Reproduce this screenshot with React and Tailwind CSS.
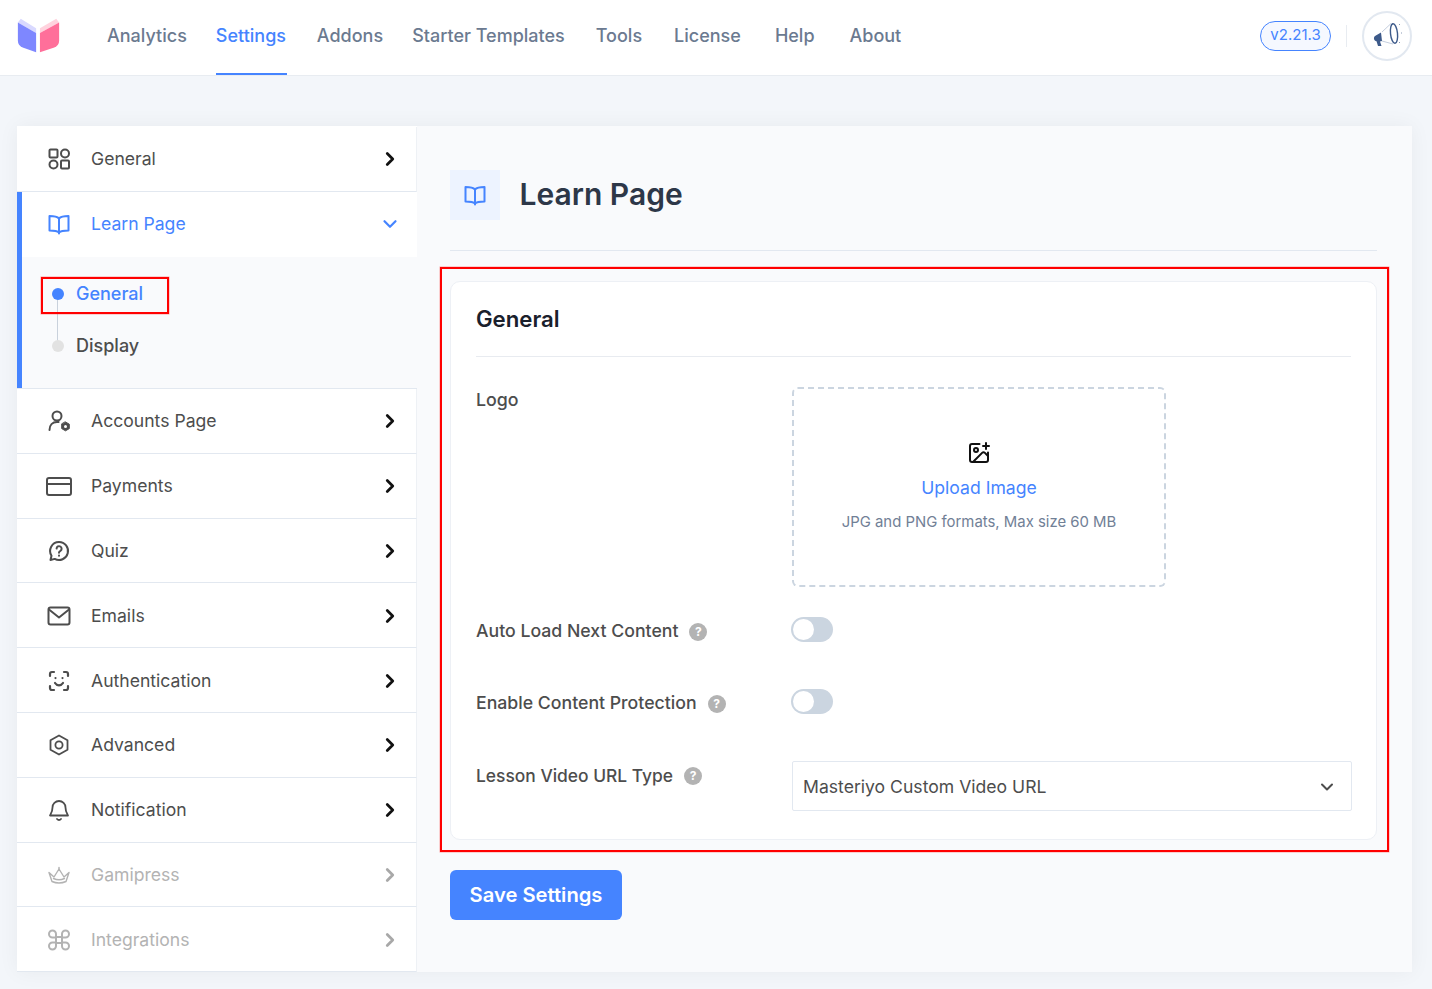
import React from 'react';
import { ChevronRight, ChevronDown, ImagePlus } from 'lucide-react';

const S = ({ children, size = 24, sw = 2, cls = '' }) => (
  <svg width={size} height={size} viewBox="0 0 24 24" fill="none" stroke="currentColor" strokeWidth={sw} strokeLinecap="round" strokeLinejoin="round" className={cls}>{children}</svg>
);

const Book = ({ size = 24, sw = 2 }) => (
  <S size={size} sw={sw}>
    <path d="M12 6.500C10.500 4.800 8 4 2.500 4v14.500c5.500 0 8 .6 9.500 2 1.500-1.400 4-2 9.500-2V4C16 4 13.500 4.800 12 6.500Z" />
    <path d="M12 6.500v15" />
  </S>
);

const icons = {
  grid: (
    <S>
      <rect x="2.500" y="2.500" width="8" height="8" rx="1" /><circle cx="18" cy="6.500" r="4" />
      <circle cx="6.500" cy="17.500" r="4" /><rect x="14" y="13.500" width="8" height="8" rx="1" />
    </S>
  ),
  user: (
    <S>
      <circle cx="10" cy="7" r="4.500" />
      <path d="M2.500 21c0-5 3-8 7.500-8 .6 0 1.100 0 1.600.1" />
      <path d="M18.500 13l3.800 2.200v4.400L18.500 21.800l-3.800-2.200v-4.400Z" fill="currentColor" strokeWidth="1" />
      <circle cx="18.500" cy="17.400" r="1.500" fill="#fff" stroke="none" />
    </S>
  ),
  card: (
    <svg width="26" height="24" viewBox="0 0 26 24" fill="none" stroke="currentColor" strokeWidth="2" strokeLinejoin="round">
      <rect x="1" y="4" width="24" height="17" rx="2" /><path d="M1 10h24" />
    </svg>
  ),
  quiz: (
    <S>
      <path d="M12 3a9 9 0 1 1-4.300 16.900L3.500 21l1-4.200A9 9 0 0 1 12 3Z" />
      <path d="M9.600 9.600a2.500 2.500 0 1 1 3.800 2.200c-.9.5-1.400 1-1.400 2" /><path d="M12 16.600v.1" />
    </S>
  ),
  mail: (
    <S>
      <rect x="1.500" y="3.500" width="21" height="17" rx="2" /><path d="M2 5.500l10 8 10-8" />
    </S>
  ),
  face: (
    <S sw={2.2}>
      <path d="M3 7V5a2 2 0 0 1 2-2h2M17 3h2a2 2 0 0 1 2 2v2M21 17v2a2 2 0 0 1-2 2h-2M7 21H5a2 2 0 0 1-2-2v-2" />
      <path d="M8 14c1 1.600 2.400 2.300 4 2.300s3-.7 4-2.300" /><path d="M8.500 9v.1M15.500 9v.1" />
    </S>
  ),
  hex: (
    <S sw={1.8}>
      <path d="M12 2.500l8.500 4.800v9.400L12 21.500l-8.500-4.800V7.300Z" /><circle cx="12" cy="12" r="3.600" />
    </S>
  ),
  bell: (
    <S sw={1.8}>
      <path d="M12 3a6.500 6.500 0 0 0-6.500 6.500c0 4.500-2 6.500-2.500 8h18c-.5-1.500-2.500-3.500-2.500-8A6.500 6.500 0 0 0 12 3Z" />
      <path d="M10 21c.6.7 1.200 1 2 1s1.400-.3 2-1" />
    </S>
  ),
  crown: (
    <S sw={1.4}>
      <path d="M2 9.500 5 18.500Q12 21.500 19 18.500L22 9.500 17 14 12 6 7 14Z" />
      <path d="M12 6V4.500" />
      <path d="M6.500 15.500Q12 18 17.500 15.500" />
    </S>
  ),
  cmd: (
    <S>
      <path d="M15 9H9v6h6V9Z" />
      <path d="M9 9V6a3.500 3.500 0 1 0-3.500 3.500H9M15 9V6a3.500 3.500 0 1 1 3.500 3.500H15M9 15v3a3.500 3.500 0 1 1-3.500-3.500H9M15 15v3a3.500 3.500 0 1 0 3.500-3.500H15" />
    </S>
  ),
};

function Row({ icon, label, muted }) {
  return (
    <div className={`flex items-center h-[64.8px] pt-[1px] border-b border-r border-b-[#e2e8f0] border-r-[#eef1f5] pl-[28.5px] pr-[15px] ${muted ? 'text-[#b3b3b3]' : 'text-[#4d4d4d]'}`}>
      <span className="w-[26px] flex justify-center shrink-0">{icons[icon]}</span>
      <span className="ml-[19.5px] text-[17.6px] leading-6 flex-1">{label}</span>
      <ChevronRight size={22} strokeWidth={3} className={muted ? 'text-[#a8a8a8]' : 'text-[#111]'} />
    </div>
  );
}

function Help() {
  return <span className="w-[18px] h-[18px] rounded-full bg-[#b3b3b3] text-white text-[12px] font-bold flex items-center justify-center ml-[11px] mt-[1px] shrink-0">?</span>;
}

function Toggle() {
  return (
    <div className="w-[42px] h-[25px] rounded-full bg-[#cbd5e0] p-[2px] ml-[-1px]">
      <div className="w-[21px] h-[21px] rounded-full bg-white" />
    </div>
  );
}

const nav = [
  ['Analytics', 'ml-[45px]'], ['Settings', 'ml-[29px] w-[71px]'], ['Addons', 'ml-[30px]'], ['Starter Templates', 'ml-[29px]'],
  ['Tools', 'ml-[31px]'], ['License', 'ml-[32px]'], ['Help', 'ml-[34px]'], ['About', 'ml-[35px]'],
];

export default function App() {
  return (
    <div className="min-h-[989px] bg-[#f3f6fa] text-[#4d4d4d]" style={{ fontFamily: 'Inter, "Noto Sans", sans-serif' }}>
      <header className="h-[76px] bg-white border-b border-[#e8ecf1] flex items-stretch pl-[15px] pr-[20px]">
        <div className="flex items-center pb-[3px]">
          <svg width="47" height="40" viewBox="0 0 49 40">
            <path d="M6 2 22 12V17L3 6Z" fill="#d9d9ff" />
            <path d="M43 2 26 12V17L46 6Z" fill="#ffd3de" />
            <path d="M3 6 22 17V37L8 32Q3 30 3 25Z" fill="#7e87ff" />
            <path d="M46 6 26 17V37L41 32Q46 30 46 25Z" fill="#ff6f9a" />
          </svg>
        </div>
        <nav className="flex items-stretch text-[18px] font-[550] text-[#6b7a90]">
          {nav.map(([n, m]) => (
            <div key={n} className={`${m} flex items-center pb-[4px] ${n === 'Settings' ? 'text-[#4584ff] border-b-2 border-[#4584ff] pt-[2px]' : ''}`}>{n}</div>
          ))}
        </nav>
        <div className="ml-auto flex items-center pb-[4px]">
          <div className="h-[30px] w-[71px] rounded-full border border-[#4584ff] bg-[#f5f8ff] text-[#4584ff] text-[15px] flex items-center justify-center">v2.21.3</div>
          <div className="w-px h-[22px] bg-[#e8ecf1] mx-[15px]" />
          <div className="w-[50px] h-[50px] rounded-full border-2 border-[#e2e8f0] flex items-center justify-center">
            <svg width="30" height="30" viewBox="0 0 30 30" fill="none">
              <path d="M9 11.500 3 15c-1.500 1-1.500 4 .5 5l1 .3L6 25H9.500L8 20.500 10 20Z" fill="#3d5a8a" />
              <path d="M10 11l9-8.500M10 20l11 3" stroke="#c4cede" strokeWidth="1" />
              <ellipse cx="22" cy="12.500" rx="3.500" ry="9.800" stroke="#3d5a8a" strokeWidth="1.400" transform="rotate(-6 22 12.500)" />
              <path d="M27 4l1-1M29 12h1M27 21l1 1" stroke="#8a9ab5" strokeWidth="1" />
            </svg>
          </div>
        </div>
      </header>

      <div className="flex w-[1395px] ml-[17px] mt-[50px] shadow-[0_0_20px_rgba(0,0,0,0.05)]">
        <aside className="w-[400px] shrink-0 bg-white pt-[1px]">
          <Row icon="grid" label="General" />
          <div className="border-l-[5px] border-[#4584ff]">
            <div className="flex items-center h-[64.8px] pl-[23.5px] pr-[16px] text-[#4584ff]">
              <span className="w-[26px] flex justify-center"><Book /></span>
              <span className="ml-[19.5px] text-[17.6px] leading-6 flex-1">Learn Page</span>
              <ChevronDown size={22} strokeWidth={2.4} />
            </div>
            <div className="h-[131.5px] bg-[#f9fafc] pl-[30px] pt-[24px] relative">
              <div className="absolute left-[35px] top-[37px] w-px h-[51px] bg-[#c9d1dc]" />
              <div className="flex items-center h-[26px] font-[550] text-[18px] text-[#4584ff]">
                <span className="w-[12px] h-[12px] rounded-full bg-[#4584ff] mr-[12px] relative" />General
              </div>
              <div className="flex items-center h-[26px] mt-[26px] font-[550] text-[18px] text-[#4d4d4d]">
                <span className="w-[12px] h-[12px] rounded-full bg-[#e2e2e2] mr-[12px] relative" />Display
              </div>
              <div className="absolute left-[19px] top-[20.5px] w-[128px] h-[37px] border-2 border-[#f00] shadow-[0_0_0_0.5px_rgba(255,0,0,0.35)]" />
            </div>
          </div>
          <div className="border-t border-[#e2e8f0]" />
          <Row icon="user" label="Accounts Page" />
          <Row icon="card" label="Payments" />
          <Row icon="quiz" label="Quiz" />
          <Row icon="mail" label="Emails" />
          <Row icon="face" label="Authentication" />
          <Row icon="hex" label="Advanced" />
          <Row icon="bell" label="Notification" />
          <Row icon="crown" label="Gamipress" muted />
          <Row icon="cmd" label="Integrations" muted />
        </aside>

        <main className="flex-1 bg-[#f9fafc] pl-[33px] pr-[35px] pt-[44px] pb-[52px]">
          <div className="flex items-center gap-[19.5px] pb-[30px] border-b border-[#e2e8f0]">
            <div className="w-[50px] h-[50px] bg-[#edf3ff] text-[#4584ff] flex items-center justify-center"><Book /></div>
            <h1 className="text-[30px] font-semibold text-[#2d3748] leading-9 pb-[2px]">Learn Page</h1>
          </div>

          <div className="relative mt-[30px]">
            <div className="absolute -left-[10px] -right-[12px] -top-[14px] -bottom-[12px] border-2 border-[#f00] pointer-events-none shadow-[0_0_0_0.5px_rgba(255,0,0,0.35)]" />
            <section className="bg-white border border-[#edf0f5] rounded-[10px] px-[25px] pt-[21px] h-[559px]">
              <h2 className="text-[22.2px] font-semibold text-[#1a202c] leading-[32px] pb-[21px] border-b border-[#e8ebf0]">General</h2>
              <div className="flex mt-[30px]">
                <label className="w-[316px] text-[17.8px] font-[550] leading-6 pt-[1px]">Logo</label>
                <div className="w-[374px] h-[200px] border-2 border-dashed border-[#cbd5e0] rounded-[6px] flex flex-col items-center justify-center">
                  <ImagePlus size={24} strokeWidth={2} className="text-[#111] -ml-[1px]" />
                  <div className="text-[17.6px] text-[#4584ff] mt-[9px] leading-7">Upload Image</div>
                  <div className="text-[14.9px] text-[#718096] mt-[8px] leading-6">JPG and PNG formats, Max size 60 MB</div>
                </div>
              </div>
              <div className="flex items-center mt-[30px] h-[25px]">
                <div className="w-[316px] flex items-center text-[17.7px] font-[550] pt-[3px]">Auto Load Next Content<Help /></div>
                <Toggle />
              </div>
              <div className="flex items-center mt-[47px] h-[25px]">
                <div className="w-[316px] flex items-center text-[17.7px] font-[550] pt-[3px]">Enable Content Protection<Help /></div>
                <Toggle />
              </div>
              <div className="flex mt-[47px]">
                <div className="w-[316px] flex items-center text-[17.4px] font-[550] leading-7 h-[28px] pt-[1px]">Lesson Video URL Type<Help /></div>
                <div className="flex-1 -mr-[1px] h-[50px] border border-[#e2e8f0] rounded-[2px] flex items-center pl-[10px] pr-[14px] pt-[2px] text-[17.6px] justify-between">
                  Masteriyo Custom Video URL
                  <ChevronDown size={20} strokeWidth={2.4} />
                </div>
              </div>
            </section>
          </div>

          <button className="mt-[30px] h-[50px] w-[172px] rounded-[6px] bg-[#4584ff] text-white text-[20.2px] font-semibold">Save Settings</button>
        </main>
      </div>
    </div>
  );
}
